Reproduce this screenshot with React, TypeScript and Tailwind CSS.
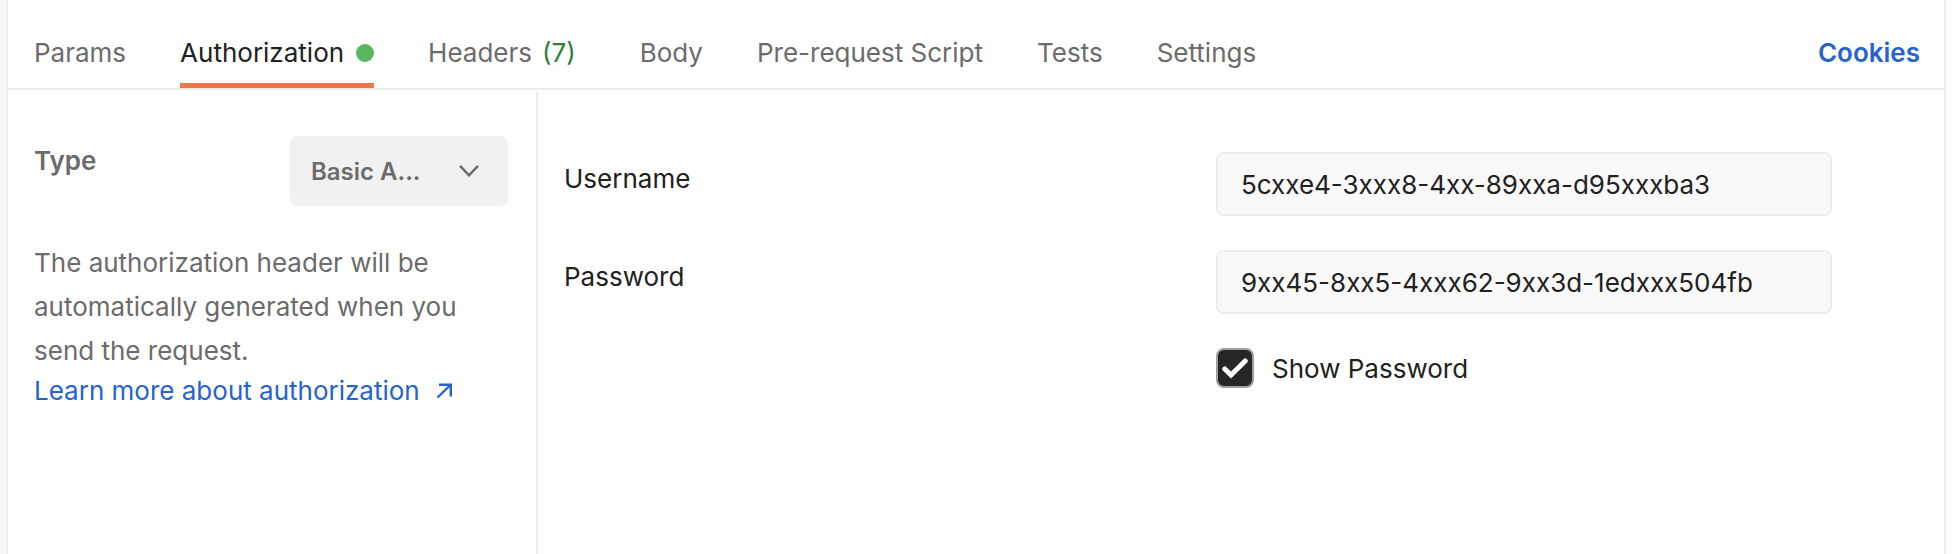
import { useState } from 'react'

const tabs = [
  { name: 'Params' },
  { name: 'Authorization', active: true },
  { name: 'Headers', count: 7 },
  { name: 'Body' },
  { name: 'Pre-request Script' },
  { name: 'Tests' },
  { name: 'Settings' },
];

function TabBar() {
  return (
    <header className="flex items-stretch justify-between border-b-2 border-[#ededed] pl-[26px] pr-6">
      <nav className="flex gap-[54px]">
        {tabs.map((tab) => (
          <button
            key={tab.name}
            type="button"
            className={
              tab.active
                ? 'flex h-[88px] items-center gap-3 whitespace-nowrap border-b-[5px] border-[#f27549] pt-[23px] text-[#212121]'
                : 'flex h-[88px] items-center gap-2.5 whitespace-nowrap border-b-[5px] border-transparent pt-[23px]'
            }
          >
            {tab.name}
            {tab.active && <span className="size-[18px] rounded-full bg-[#58b75f]" />}
            {tab.count && <span className="pr-2.5 text-[#2f7d3b]">({tab.count})</span>}
          </button>
        ))}
      </nav>
      <a href="#cookies" className="flex items-center pt-[18px] font-semibold text-[#2563cf]">
        Cookies
      </a>
    </header>
  );
}

function Sidebar() {
  return (
    <aside className="mt-0.5 w-[530px] shrink-0 border-r-2 border-[#ededed] pl-[26px] pr-7 pt-11">
      <div className="flex items-start justify-between">
        <label htmlFor="auth-type" className="pt-[7px] font-semibold">
          Type
        </label>
        <div className="grid w-[218px] items-center">
          <select
            id="auth-type"
            className="col-start-1 row-start-1 h-[70px] w-full appearance-none rounded-lg bg-[#f1f1f1] pl-[21px] pr-16 pt-0.5 text-[24px] font-semibold"
          >
            <option>Basic A...</option>
          </select>
          <svg
            className="pointer-events-none col-start-1 row-start-1 mr-[29px] h-3 w-5 justify-self-end"
            viewBox="0 0 20 12"
            fill="none"
            stroke="currentColor"
            strokeWidth="2.4"
          >
            <path d="M1 .8l9 9.5L19 .8" />
          </svg>
        </div>
      </div>

      <p className="mt-[35px] leading-[44px]">
        The authorization header will be automatically generated when you send the request.
      </p>
      <a href="#learn" className="flex items-center gap-4 leading-9 text-[#2563cf]">
        Learn more about authorization
        <svg
          className="size-4"
          viewBox="0 0 16 16"
          fill="none"
          stroke="currentColor"
          strokeWidth="2.4"
        >
          <path d="M3 1.7h11.8V13.5M14.5 2L1.5 14.5" />
        </svg>
      </a>
    </aside>
  );
}

const fieldClass =
  'h-16 w-full rounded-lg border-2 border-[#ededed] bg-[#f9f9f9] px-[23px] text-[#212121]';

function Credentials() {
  const [username, setUsername] = useState('5cxxe4-3xxx8-4xx-89xxa-d95xxxba3');
  const [password, setPassword] = useState('9xx45-8xx5-4xxx62-9xx3d-1edxxx504fb');
  const [showPassword, setShowPassword] = useState(true);

  return (
    <form className="grid flex-1 grid-cols-[652fr_616fr] content-start gap-y-[34px] pl-[26px] pr-28 pt-[62px] text-[#212121]">
      <label htmlFor="username" className="pt-[9px]">
        Username
      </label>
      <input
        id="username"
        type="text"
        value={username}
        onChange={(e) => setUsername(e.target.value)}
        className={fieldClass}
      />

      <label htmlFor="password" className="pt-[9px]">
        Password
      </label>
      <input
        id="password"
        type={showPassword ? 'text' : 'password'}
        value={password}
        onChange={(e) => setPassword(e.target.value)}
        className={fieldClass}
      />

      <div className="col-start-2 flex items-center gap-[18px]">
        <div className="grid h-10 w-[38px] place-items-center">
          <input
            id="show-password"
            type="checkbox"
            checked={showPassword}
            onChange={(e) => setShowPassword(e.target.checked)}
            className="col-start-1 row-start-1 size-full appearance-none rounded-lg border-2 border-[#a0a0a0] bg-white checked:bg-[#262626]"
          />
          {showPassword && (
            <svg
              className="pointer-events-none col-start-1 row-start-1 h-[22px] w-[26px]"
              viewBox="0 0 26 22"
              fill="none"
              stroke="white"
              strokeWidth="5"
              strokeLinecap="round"
              strokeLinejoin="miter"
            >
              <path d="M2.8 12l6.2 6L23.2 4" />
            </svg>
          )}
        </div>
        <label htmlFor="show-password" className="pt-0.5">
          Show Password
        </label>
      </div>
    </form>
  );
}

export default function App() {
  return (
    <div className="flex min-h-screen bg-white pr-2.5 font-[Inter,sans-serif] text-[26px] leading-9 text-[#6b6b6b]">
      <div className="w-1.5 shrink-0 bg-[#f8f8f8]" />
      <div className="flex flex-1 flex-col border-x-2 border-[#ededed]">
        <TabBar />
        <main className="flex flex-1">
          <Sidebar />
          <Credentials />
        </main>
      </div>
    </div>
  );
}
